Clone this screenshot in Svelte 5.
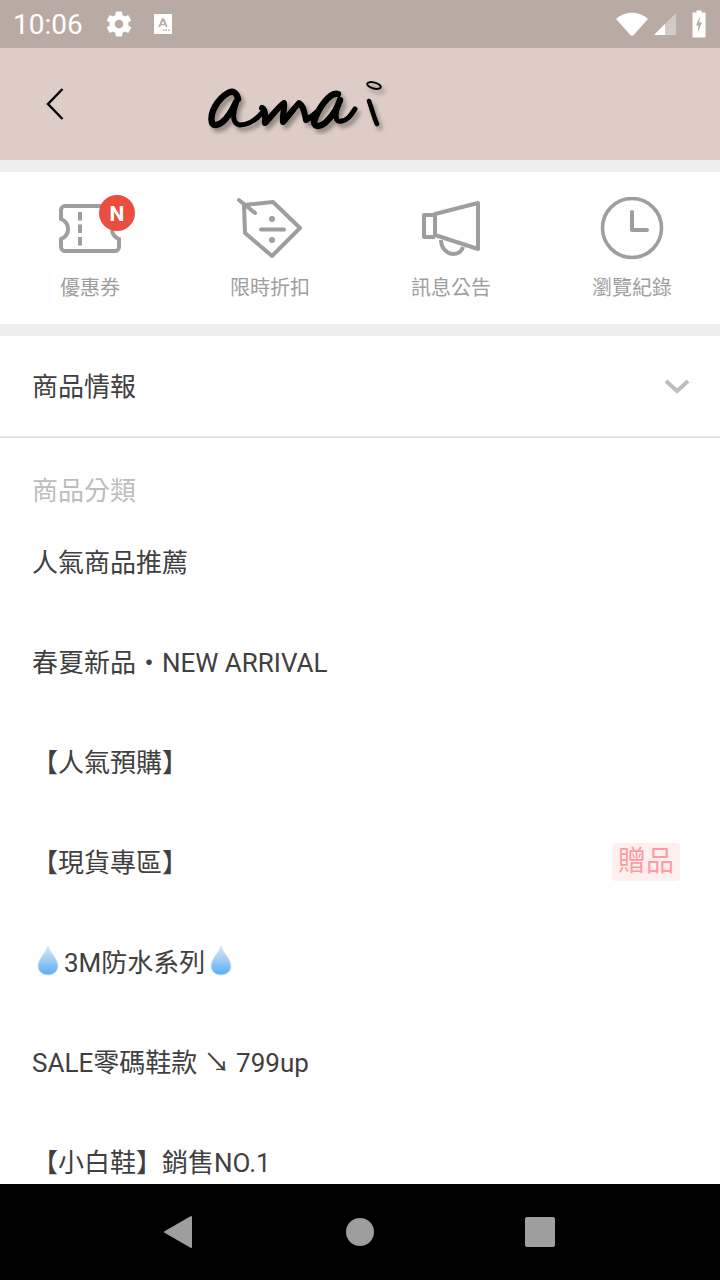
<script>
  const shortcuts = [
    { label: "優惠券", icon: "ticket" },
    { label: "限時折扣", icon: "tag" },
    { label: "訊息公告", icon: "horn" },
    { label: "瀏覽紀錄", icon: "clock" }
  ];

  const items = [
    { text: "人氣商品推薦" },
    { text: "春夏新品・NEW ARRIVAL" },
    { text: "【人氣預購】" },
    { text: "【現貨專區】", badge: "贈品" },
    { text: "3M防水系列", drops: true },
    { text: "SALE零碼鞋款 ↘ 799up" },
    { text: "【小白鞋】銷售NO.1" }
  ];
</script>

{#snippet drop()}
  <svg class="drop" viewBox="0 0 32 32" width="32" height="32">
    <defs>
      <linearGradient id="dropFill" x1="0" y1="0" x2="0" y2="1">
        <stop offset="0" stop-color="#d6e6f4" />
        <stop offset="0.5" stop-color="#9ccbf3" />
        <stop offset="1" stop-color="#55adf7" />
      </linearGradient>
    </defs>
    <path d="M16 2C14.500 8 6 15 6 22C6 27.500 10.500 31 16 31C21.500 31 26 27.500 26 22C26 15 17.500 8 16 2Z" fill="url(#dropFill)" stroke="#cfe3f4" stroke-width="0.800" />
  </svg>
{/snippet}

<div class="phone">
  <div class="status">
    <span class="time">10:06</span>
    <svg class="gear" viewBox="0 0 24 24" width="30" height="30">
      <path fill="#fff" d="M19.400 13c.04-.33.06-.66.06-1s-.02-.67-.06-1l2.100-1.650c.19-.15.24-.42.12-.64l-2-3.460c-.12-.22-.39-.3-.61-.22l-2.490 1c-.52-.4-1.080-.73-1.690-.98l-.38-2.650A.49.490 0 0 0 14 2h-4c-.25 0-.46.18-.49.420l-.38 2.650c-.61.25-1.170.59-1.690.98l-2.490-1c-.23-.09-.49 0-.61.22l-2 3.460c-.13.22-.07.49.12.64L4.570 11c-.04.330-.07.670-.07 1s.03.670.07 1l-2.110 1.650c-.19.150-.24.420-.12.640l2 3.460c.12.220.39.300.61.220l2.490-1c.52.400 1.080.730 1.690.980l.38 2.650c.03.240.24.420.49.420h4c.25 0 .46-.18.49-.42l.38-2.650c.61-.25 1.170-.59 1.690-.98l2.490 1c.23.09.49 0 .61-.22l2-3.460c.12-.22.07-.49-.12-.64L19.400 13ZM12 15.500a3.500 3.500 0 1 1 0-7 3.500 3.500 0 0 1 0 7Z" />
    </svg>
    <svg class="note" viewBox="0 0 18 20" width="18" height="20">
      <path fill="#fff" fill-rule="evenodd" d="M0 0H18V20H0ZM7.800 4.500 4.300 13H6.200L6.900 11.200H11.100L11.800 13H13.700L10.200 4.500ZM9 6.900 10.400 9.700H7.600ZM9 15.500V17H10.500V15.500ZM11.500 15.500V17H13V15.500ZM14 15.500V17H15.500V15.500Z" />
    </svg>
    <span class="spacer"></span>
    <svg class="wifi" viewBox="0 0 32 24" width="32" height="24">
      <path fill="#fff" d="M0 7C8.500 -1.500 23.500 -1.500 32 7L17.400 23.200C16.600 24 15.400 24 14.600 23.200Z" />
    </svg>
    <svg class="signal" viewBox="0 0 22 22" width="22" height="22">
      <path fill="#d3cac5" d="M22 0V22H0Z" />
      <path fill="#fff" d="M11 11V22H0Z" />
    </svg>
    <svg class="battery" viewBox="0 0 14 28" width="14" height="28">
      <path fill="#fff" fill-rule="evenodd" d="M4.500 0.500H9.500V2.500H13.500V27.500H0.500V2.500H4.500ZM8 6 4 15.500H6.500L5.500 23 10 12.500H7.200Z" />
    </svg>
  </div>

  <header class="topbar">
    <svg class="back" viewBox="0 0 20 34" width="20" height="34">
      <path d="M17.500 2 3 17 17.500 32" fill="none" stroke="#000" stroke-width="2.400" />
    </svg>
    <svg class="logo" viewBox="205 75 185 60" width="185" height="60">
      <defs>
        <filter id="logoShadow" x="-10%" y="-15%" width="120%" height="140%">
          <feDropShadow dx="3" dy="4" stdDeviation="2" flood-color="#000" flood-opacity="0.35" />
        </filter>
      </defs>
      <g fill="none" stroke="#000" stroke-linecap="round" stroke-linejoin="round" stroke-width="6.400" filter="url(#logoShadow)">
        <path d="M238 99C237 93 233 90 228 93C219 98 209 112 212 123C216 129 227 122 236 102" />
        <path d="M236 104C232 116 233 124 240 125C246 125 254 122 262 113" stroke-width="5" />
        <path d="M262 108C266 110 265 117 265 123C272 116 279 106 284 103C285 108 282 116 283 122C290 114 296 106 299 103C304 106 304 112 306 120C310 118 313 116 316 113" stroke-width="6" />
        <path d="M338 94C330 92 318 108 314 122C314 128 322 127 328 120C334 114 338 106 340 100" />
        <path d="M338 106C335 116 335 123 342 121C348 120 351 115 355 109" stroke-width="5" />
        <path d="M369 101C372 109 374 118 377 124" stroke-width="4.600" />
        <ellipse cx="374" cy="85.500" rx="7" ry="3" transform="rotate(15 374 85.500)" stroke-width="2" />
      </g>
    </svg>
  </header>

  <main class="content">
    <nav class="shortcuts">
      {#each shortcuts as s}
        <div class="shortcut">
          <div class="shortcut-icon">
            {#if s.icon === "ticket"}
              <svg viewBox="0 0 76 64" width="76" height="64">
                <g fill="none" stroke="#9e9e9e" stroke-width="4">
                  <path d="M13 10H63C65 10 67 12 67 14V23C62 25 60 29 60 33C60 37 62 41 67 43V51C67 53 65 55 63 55H13C11 55 9 53 9 51V43C14 41 16 37 16 33C16 29 14 25 9 23V14C9 12 11 10 13 10Z" />
                  <path d="M28 16V50" stroke-dasharray="8.500 4" />
                </g>
                <circle cx="65" cy="17" r="18" fill="#e94e41" />
                <text x="65" y="24.500" class="badge-n">N</text>
              </svg>
            {:else if s.icon === "tag"}
              <svg viewBox="0 0 76 64" width="76" height="64">
                <g fill="none" stroke="#9e9e9e" stroke-width="4" stroke-linecap="round" stroke-linejoin="round">
                  <path d="M12 9 41 6 68 32 40 60 13 37Z" />
                  <path d="M7 4 23 17" />
                  <path d="M29 33.500H52" />
                </g>
                <circle cx="40" cy="23" r="3" fill="#9e9e9e" />
                <circle cx="40" cy="44" r="3" fill="#9e9e9e" />
              </svg>
            {:else if s.icon === "horn"}
              <svg viewBox="0 0 76 64" width="76" height="64">
                <g fill="none" stroke="#9e9e9e" stroke-width="4" stroke-linejoin="round">
                  <path d="M22 18 65 7V53L22 39Z" />
                  <path d="M22 19H11V41H22" />
                  <path d="M28 44C28 52 34 58 40 58C45 58 49 55 50 51" />
                </g>
              </svg>
            {:else}
              <svg viewBox="0 0 76 64" width="76" height="64">
                <circle cx="38" cy="32" r="29.500" fill="none" stroke="#9e9e9e" stroke-width="3.600" />
                <path d="M38 16V34H53" fill="none" stroke="#9e9e9e" stroke-width="4" stroke-linecap="round" stroke-linejoin="round" />
              </svg>
            {/if}
          </div>
          <div class="shortcut-label">{s.label}</div>
        </div>
      {/each}
    </nav>

    <section class="menu">
      <div class="accordion">
        <span>商品情報</span>
        <svg viewBox="0 0 26 16" width="26" height="16">
          <path d="M2 3 13 13 24 3" fill="none" stroke="#bdbdbd" stroke-width="4" />
        </svg>
      </div>

      <div class="list">
        <div class="list-title">商品分類</div>
        {#each items as item}
          <div class="item">
            <span class="item-text">
              {#if item.drops}{@render drop()}{/if}{item.text}{#if item.drops}{@render drop()}{/if}
            </span>
            {#if item.badge}
              <span class="badge">{item.badge}</span>
            {/if}
          </div>
        {/each}
      </div>
    </section>
  </main>

  <footer class="navbar">
    <svg viewBox="0 0 32 34" width="32" height="34">
      <path fill="#9e9e9e" stroke="#9e9e9e" stroke-width="2" stroke-linejoin="round" d="M2 17 28 2V32Z" />
    </svg>
    <svg viewBox="0 0 28 28" width="28" height="28">
      <circle cx="14" cy="14" r="14" fill="#9e9e9e" />
    </svg>
    <div class="square"></div>
  </footer>
</div>

<style>
  :global(body) {
    margin: 0;
    background: #fff;
  }

  .phone {
    width: 720px;
    height: 1280px;
    display: flex;
    flex-direction: column;
    overflow: hidden;
    font-family: Roboto, "Noto Sans CJK TC", sans-serif;
  }

  .status {
    height: 48px;
    flex: none;
    background: #b9aaa3;
    display: flex;
    align-items: center;
    padding: 0 14px 0 13px;
    box-sizing: border-box;
  }

  .time {
    color: #fff;
    font-size: 28px;
    margin-right: 21px;
  }

  .gear {
    margin-right: 20px;
  }

  .spacer {
    flex: 1;
  }

  .wifi {
    margin-right: 6px;
  }

  .signal {
    margin-right: 16px;
  }

  .topbar {
    height: 112px;
    flex: none;
    background: #decdc6;
    display: flex;
    align-items: center;
    padding-left: 45px;
    box-sizing: border-box;
  }

  .logo {
    margin-left: 140px;
    margin-top: 2px;
  }

  .content {
    flex: 1;
    min-height: 0;
    overflow: hidden;
    background: #eeeeee;
    padding-top: 12px;
  }

  .shortcuts {
    height: 152px;
    background: #fff;
    display: grid;
    grid-template-columns: 180px 180px 182px 178px;
  }

  .shortcut {
    display: flex;
    flex-direction: column;
    align-items: center;
    padding-top: 24px;
    box-sizing: border-box;
  }

  .shortcut:last-child {
    padding-left: 2px;
  }

  .shortcut-icon {
    height: 64px;
  }

  .shortcut-icon svg {
    overflow: visible;
  }

  .shortcut-label {
    margin-top: 13px;
    font-size: 20px;
    line-height: 30px;
    color: #9e9e9e;
    white-space: nowrap;
  }

  .badge-n {
    font-size: 21px;
    font-weight: 700;
    fill: #fff;
    text-anchor: middle;
  }

  .menu {
    margin-top: 12px;
    background: #fff;
    height: 900px;
  }

  .accordion {
    height: 102px;
    box-sizing: border-box;
    border-bottom: 2px solid #e4e4e4;
    padding: 0 30px 0 32px;
    display: flex;
    align-items: center;
    justify-content: space-between;
    font-size: 26px;
    color: #404040;
  }

  .accordion span {
    margin-bottom: 4px;
  }

  .list {
    padding-top: 34px;
  }

  .list-title {
    padding-left: 32px;
    font-size: 26px;
    line-height: 38px;
    color: #bdbdbd;
  }

  .item {
    height: 100px;
    box-sizing: border-box;
    padding: 0 40px 0 32px;
    display: flex;
    align-items: center;
    justify-content: space-between;
    font-size: 26px;
    color: #404040;
  }

  .item-text {
    display: flex;
    align-items: center;
    white-space: pre;
  }

  .drop {
    flex: none;
  }

  .badge {
    background: #fff0f0;
    color: #ff9b9f;
    border-radius: 4px;
    padding: 0 6px;
    font-size: 28px;
    line-height: 38px;
    margin-top: 4px;
  }

  .navbar {
    height: 96px;
    flex: none;
    background: #000;
    display: flex;
    align-items: center;
    justify-content: space-between;
    padding: 0 165px 0 163px;
    box-sizing: border-box;
  }

  .square {
    width: 30px;
    height: 30px;
    background: #9e9e9e;
    border-radius: 2px;
  }
</style>
